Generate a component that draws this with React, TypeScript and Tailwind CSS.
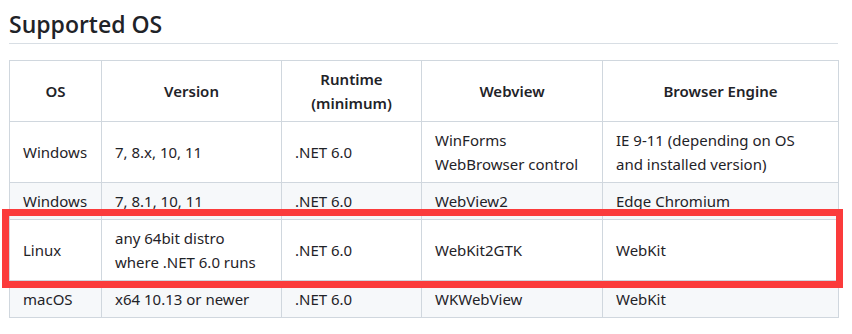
import React from 'react';

const rows = [
  { os: 'Windows', version: ['7, 8.x, 10, 11'], runtime: '.NET 6.0', webview: ['WinForms', 'WebBrowser control'], engine: ['IE 9-11 (depending on OS', 'and installed version)'] },
  { os: 'Windows', version: ['7, 8.1, 10, 11'], runtime: '.NET 6.0', webview: ['WebView2'], engine: ['Edge Chromium'] },
  { os: 'Linux', version: ['any 64bit distro', 'where .NET 6.0 runs'], runtime: '.NET 6.0', webview: ['WebKit2GTK'], engine: ['WebKit'] },
  { os: 'macOS', version: ['x64 10.13 or newer'], runtime: '.NET 6.0', webview: ['WKWebView'], engine: ['WebKit'] },
];

const Lines = ({ lines }: { lines: string[] }) => (
  <>
    {lines.map((l, i) => (
      <div key={i}>{l}</div>
    ))}
  </>
);

export default function App() {
  return (
    <div className="w-[852px] h-[334px] bg-white text-[#1f2328] font-['Noto_Sans',sans-serif] relative overflow-hidden">
      <div className="pl-[9px] pr-[14px] pt-[9px]">
        <h2 className="text-[23px] leading-[30px] font-semibold font-['Open_Sans',sans-serif] pb-[4px] border-b border-[#d8dee4]">
          Supported OS
        </h2>
        <table className="mt-[16px] table-fixed border-collapse w-[829px] text-[15px] leading-[24px]">
          <colgroup>
            <col className="w-[92px]" />
            <col className="w-[180px]" />
            <col className="w-[140px]" />
            <col className="w-[181px]" />
            <col className="w-[236px]" />
          </colgroup>
          <thead>
            <tr>
              <th className="border border-[#d0d7de] px-[13px] py-[6px] font-semibold text-center">OS</th>
              <th className="border border-[#d0d7de] px-[13px] py-[6px] font-semibold text-center">Version</th>
              <th className="border border-[#d0d7de] px-[13px] py-[6px] font-semibold text-center">
                <div>Runtime</div>
                <div>(minimum)</div>
              </th>
              <th className="border border-[#d0d7de] px-[13px] py-[6px] font-semibold text-center">Webview</th>
              <th className="border border-[#d0d7de] px-[13px] py-[6px] font-semibold text-center">Browser Engine</th>
            </tr>
          </thead>
          <tbody>
            {rows.map((r, i) => (
              <tr key={i} className={i % 2 === 1 ? 'bg-[#f6f8fa]' : 'bg-white'}>
                <td className="border border-[#d0d7de] px-[13px] py-[6px]">{r.os}</td>
                <td className="border border-[#d0d7de] px-[13px] py-[6px]"><Lines lines={r.version} /></td>
                <td className="border border-[#d0d7de] px-[13px] py-[6px]">{r.runtime}</td>
                <td className="border border-[#d0d7de] px-[13px] py-[6px]"><Lines lines={r.webview} /></td>
                <td className="border border-[#d0d7de] px-[13px] py-[6px]"><Lines lines={r.engine} /></td>
              </tr>
            ))}
          </tbody>
        </table>
      </div>
      <div className="absolute left-[2px] top-[209px] w-[841px] h-[79px] border-[7px] border-[#fb3b3b]" />
    </div>
  );
}
